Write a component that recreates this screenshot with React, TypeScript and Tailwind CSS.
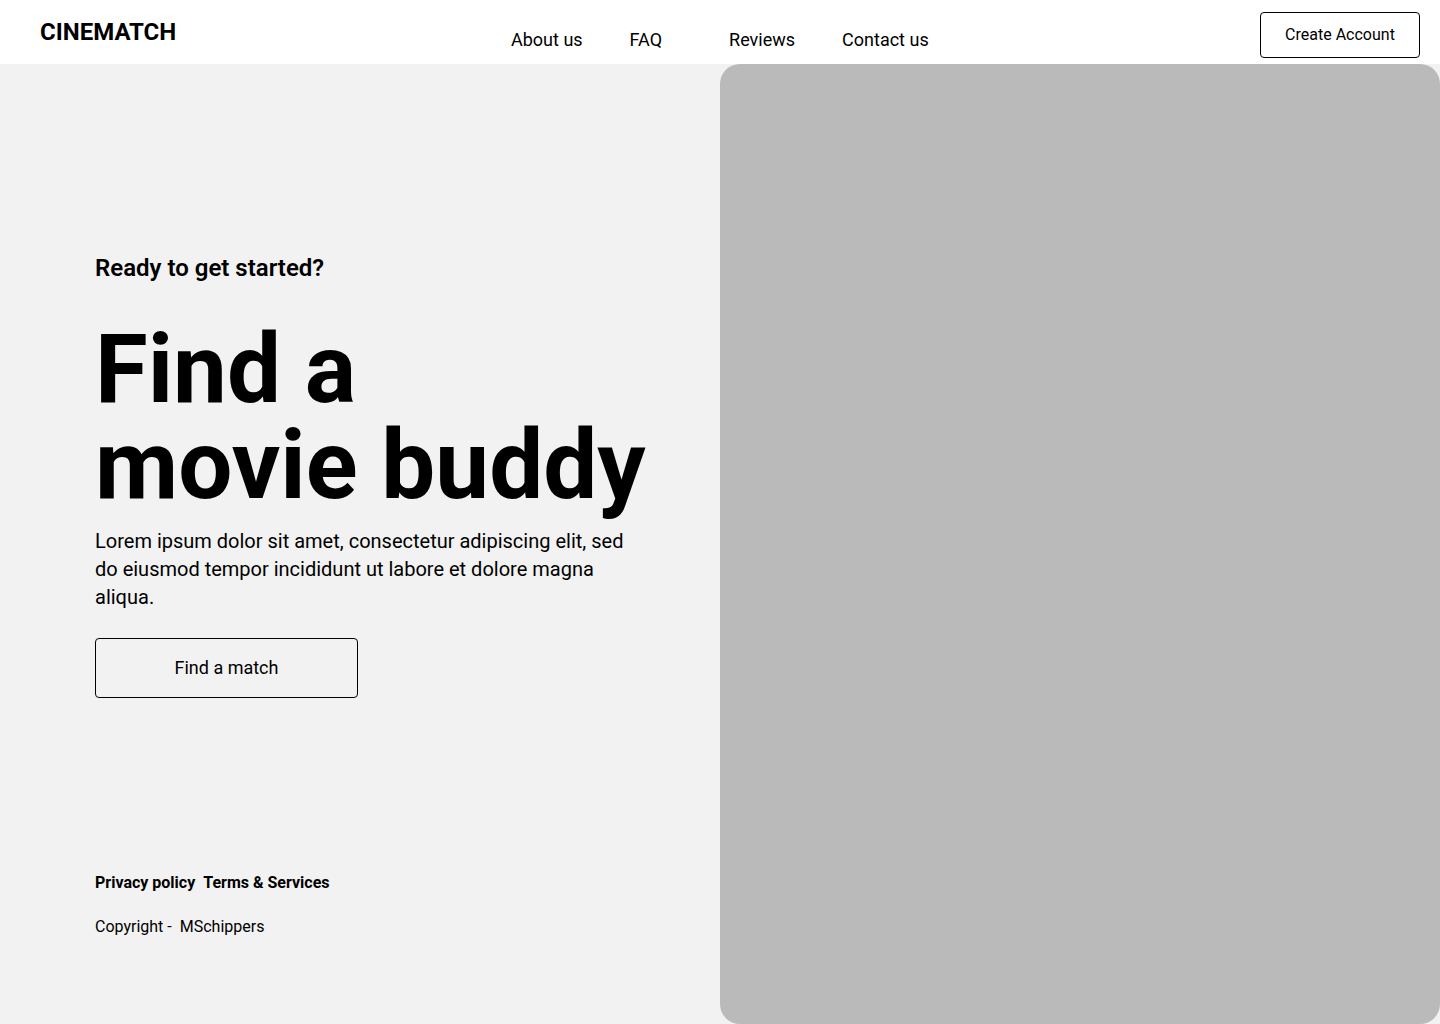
import React from 'react';

const navItems = [
  { label: 'About us', cls: '' },
  { label: 'FAQ', cls: 'ml-[47px]' },
  { label: 'Reviews', cls: 'ml-[67px]' },
  { label: 'Contact us', cls: 'ml-[47px]' },
];

const App = () => {
  return (
    <div
      className="w-[1440px] h-[1024px] bg-white text-black overflow-hidden"
      style={{ fontFamily: 'Roboto, "Noto Sans", sans-serif' }}
    >
      {/* header */}
      <header className="h-16 flex items-start bg-white">
        <div className="w-[511px] pl-10 pt-4 text-2xl leading-8 font-bold">CINEMATCH</div>
        <nav className="pt-[26px] flex text-lg leading-7">
          {navItems.map((item) => (
            <a key={item.label} className={item.cls}>
              {item.label}
            </a>
          ))}
        </nav>
        <div className="ml-auto pt-3 pr-5">
          <button className="w-[160px] h-[46px] border border-black rounded-[4px] text-base bg-white">
            Create Account
          </button>
        </div>
      </header>

      {/* main */}
      <main className="flex h-[960px] bg-[#f2f2f2]">
        <section className="w-[720px] pl-[95px] pt-[188px] flex flex-col items-start">
          <h6 className="text-2xl leading-8 font-semibold">Ready to get started?</h6>
          <h1 className="mt-[37px] text-[96px] leading-[96px] font-bold">
            Find a
            <br />
            movie buddy
          </h1>
          <p className="mt-[14px] w-[540px] text-xl leading-7">
            Lorem ipsum dolor sit amet, consectetur adipiscing elit, sed do eiusmod tempor
            incididunt ut labore et dolore magna aliqua.
          </p>
          <button className="mt-[27px] w-[263px] h-[60px] border border-black rounded-[4px] text-lg">
            Find a match
          </button>

          <div className="mt-[173px] flex gap-2 text-base leading-6 font-bold">
            <span>Privacy policy</span>
            <span>Terms &amp; Services</span>
          </div>
          <div className="mt-5 flex gap-2 text-base leading-6">
            <span>Copyright -</span>
            <span>MSchippers</span>
          </div>
        </section>

        <div className="w-[720px] h-[960px] bg-[#bababa] rounded-[20px]" />
      </main>
    </div>
  );
};

export default App;
